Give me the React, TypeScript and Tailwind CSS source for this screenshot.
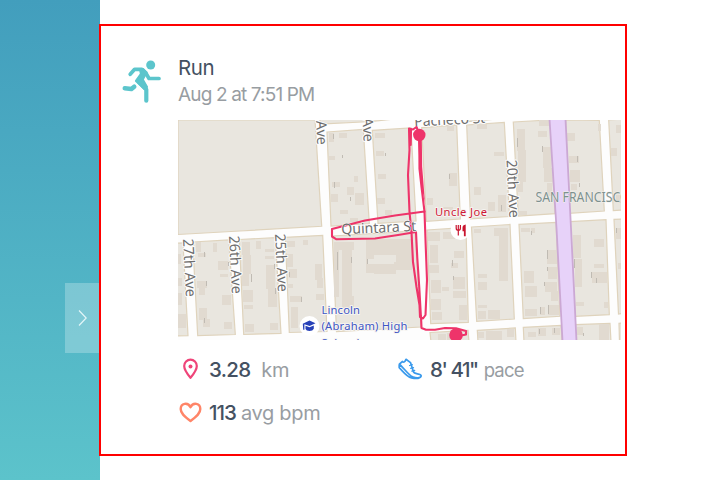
import React from "react";

const blocks = [
  "178,120 315,120 321.7,226.3 240,231 178,234.5",
  "327,132 363.3,129.5 369.3,223.5 331,226",
  "372.3,130.3 411,128 416,221 378,223.3",
  "421.7,127.7 456.7,125 460.3,219 426.5,221.3",
  "466.7,125 504.3,122.5 509.5,216.5 470.5,218.8",
  "513.3,122 550,120 555,213.7 518.3,216",
  "565.7,120 599.3,120.5 604.3,211 569,213.3",
  "608.7,120 623,119 623,210 613.3,210.5",
  "176,243.3 183,242.8 188,335.7 176,336",
  "192.7,242 228.7,240 235.3,334.5 197.7,335.7",
  "239.3,239.5 275.3,237.7 281,333.3 243.7,334.5",
  "285.3,237.3 322.7,235.3 327,331.5 289.3,332.5",
  "332.3,236 415,231 421,327 336.5,331.5",
  "427,230 466,227.5 468.3,322.3 430.7,323.7",
  "471.5,227 510,224.5 514.3,319 476.7,321.3",
  "519,224.3 556,222.5 560,316.3 523.3,318.7",
  "570,221.7 606,219.7 609.3,314.7 575.3,316.3",
  "614,219.3 623,219 623,313.5 618.5,314",
  "430,332.5 468,330.5 469,342 431,342",
  "477.3,330.3 515.3,328 516,342 478,342",
  "523.3,327.3 561,325.5 562,342 524,342",
  "575.3,324.7 610,323.3 611,342 576,342",
  "619,323.3 623,323 623,342 619.5,342",
  "320,117 412,117 372,121.5 320,124",
  "468,117 503,117 503,118.5 468,121.5",
];

const buildings: [number, number, number, number][] = [
  [329, 133, 5, 9], [339, 133, 8, 5], [329, 156, 6, 4], [332, 182, 8, 5], [331, 194, 7, 8],
  [347, 187, 7, 8], [355, 193, 9, 12], [354, 176, 4, 6], [340, 210, 8, 4], [350, 218, 8, 4],
  [375, 133, 10, 5], [376, 151, 8, 5], [378, 174, 8, 5], [377, 198, 8, 6], [385, 210, 7, 5],
  [449, 173, 8, 13], [447, 126, 7, 5], [427, 198, 6, 7], [443, 207, 10, 7],
  [477, 124, 10, 5], [474, 187, 7, 8], [494, 152, 10, 4], [488, 202, 7, 9], [498, 195, 8, 17],
  [517, 129, 8, 22], [518, 150, 8, 32], [517, 182, 6, 10], [518, 211, 9, 4], [539, 120, 11, 6],
  [538, 131, 9, 6], [543, 147, 8, 21], [544, 168, 9, 14], [547, 183, 5, 13],
  [567, 133, 8, 8], [569, 156, 10, 7], [570, 170, 10, 12], [571, 184, 6, 6], [598, 124, 3, 7],
  [611, 148, 6, 8], [616, 125, 5, 8], [616, 195, 5, 8],
  [178, 254, 3, 10], [178, 278, 4, 8], [178, 293, 4, 12], [178, 314, 8, 14],
  [196, 242, 5, 10], [213, 243, 4, 9], [198, 253, 8, 4], [218, 261, 10, 9], [197, 281, 10, 7],
  [199, 288, 6, 7], [220, 274, 8, 3], [222, 295, 9, 10], [199, 308, 8, 12], [203, 319, 7, 8],
  [224, 322, 8, 7], [242, 242, 8, 13], [243, 255, 8, 19], [242, 274, 7, 12], [243, 290, 10, 12],
  [244, 305, 9, 4], [245, 324, 9, 8], [266, 265, 9, 24], [268, 288, 9, 19], [270, 323, 8, 7],
  [256, 241, 5, 8], [265, 249, 9, 3], [265, 256, 9, 3], [286, 241, 9, 6], [287, 254, 6, 13],
  [289, 269, 8, 9], [287, 284, 6, 4], [290, 296, 12, 6], [291, 307, 7, 21], [315, 264, 7, 16],
  [317, 278, 6, 10], [316, 294, 8, 6], [303, 240, 5, 5],
  [334, 242, 20, 8], [334, 250, 5, 47], [342, 250, 10, 46], [342, 296, 12, 12], [366, 239, 46, 16],
  [366, 255, 8, 18], [374, 262, 22, 12], [396, 246, 16, 24],
  [428, 232, 12, 9], [430, 245, 8, 18], [429, 265, 10, 8], [431, 280, 10, 13], [431, 299, 10, 11],
  [432, 312, 10, 8], [443, 232, 12, 7], [454, 251, 10, 7], [451, 263, 7, 5], [453, 277, 12, 12],
  [453, 291, 13, 7], [459, 305, 8, 15], [442, 287, 7, 4],
  [474, 229, 7, 4], [494, 228, 14, 8], [499, 236, 9, 45], [478, 274, 9, 4], [478, 282, 9, 8],
  [478, 305, 9, 3], [478, 311, 8, 8], [488, 310, 12, 9], [521, 228, 9, 4], [531, 228, 4, 5],
  [547, 250, 10, 14], [548, 267, 9, 12], [524, 271, 10, 12], [525, 286, 12, 11], [545, 282, 12, 10],
  [551, 291, 7, 10], [525, 309, 12, 7], [540, 307, 5, 8], [548, 305, 11, 10], [573, 235, 8, 23],
  [575, 259, 7, 28], [594, 239, 10, 8], [594, 264, 10, 4], [592, 272, 15, 11], [576, 302, 8, 4],
  [604, 302, 4, 6], [616, 228, 5, 11], [618, 263, 3, 6],
  [438, 334, 8, 6], [447, 333, 8, 7], [478, 332, 6, 6], [486, 331, 16, 9], [507, 329, 7, 8],
  [528, 332, 8, 5], [538, 328, 8, 8], [552, 328, 8, 7], [577, 327, 6, 8], [599, 324, 10, 16],
];

const marks: [number, number, number][] = [
  [333, 134, 5], [342, 155, 3], [334, 182, 6], [350, 197, 4], [385, 153, 3], [449, 174, 5],
  [517, 138, 9], [542, 146, 6], [577, 156, 6], [579, 183, 4], [204, 252, 5], [206, 281, 5],
  [228, 262, 4], [204, 318, 5], [251, 274, 8], [274, 264, 5], [275, 288, 6], [289, 272, 5],
  [301, 297, 5], [337, 252, 18], [351, 257, 6], [367, 259, 5], [452, 260, 6], [453, 276, 4],
  [547, 250, 9], [547, 267, 4], [544, 282, 4], [540, 307, 7], [548, 305, 9], [574, 259, 9],
  [591, 272, 6], [596, 278, 5], [616, 228, 5], [539, 329, 5], [554, 328, 5], [583, 333, 3],
  [531, 231, 4], [501, 205, 6],
];

function Map() {
  return (
    <svg className="block h-[220px] w-[443px] font-['Noto_Sans',sans-serif]" viewBox="178 120 443 220">
      <rect x="178" y="120" width="443" height="220" fill="#fdfdfd" />
      {blocks.map((p) => (
        <polygon key={p} points={p} fill="#e9e6df" stroke="#dfd3bc" strokeWidth="1.2" />
      ))}
      {buildings.map(([x, y, w, h], i) => (
        <rect key={i} x={x} y={y} width={w} height={h} fill="#e1dad0" />
      ))}
      {marks.map(([x, y, h], i) => (
        <rect key={i} x={x} y={y} width="1" height={h} fill="#c0bbb3" />
      ))}
      <path d="M368 259h26v5h-26z" fill="#e9e6df" />
      <polygon points="549.5,119 565.5,119 571,228 576.5,341 562.5,341 556.5,228" fill="#e7d2f9" stroke="#cba8d4" strokeWidth="1.8" />

      <g fill="#6e6e6e" fontSize="14.5" stroke="#fdfdfd" strokeWidth="2" paintOrder="stroke" strokeLinejoin="round">
        <text transform="translate(316 121) rotate(87)" textLength="24" lengthAdjust="spacingAndGlyphs">Ave</text>
        <text transform="translate(362.5 118) rotate(87)" textLength="24" lengthAdjust="spacingAndGlyphs">Ave</text>
        <text transform="translate(183 239) rotate(87)" textLength="58" lengthAdjust="spacingAndGlyphs">27th Ave</text>
        <text transform="translate(229 236) rotate(87)" textLength="58" lengthAdjust="spacingAndGlyphs">26th Ave</text>
        <text transform="translate(275 234) rotate(87)" textLength="58" lengthAdjust="spacingAndGlyphs">25th Ave</text>
        <text transform="translate(506.5 160) rotate(87)" textLength="58" lengthAdjust="spacingAndGlyphs">20th Ave</text>
        <text transform="translate(414.5 126.5) rotate(-3)" textLength="71" lengthAdjust="spacingAndGlyphs">Pacheco St</text>
      </g>
      <text x="535.5" y="202" fontSize="13.5" fill="#7d918e" textLength="94" lengthAdjust="spacingAndGlyphs" stroke="#f4f1ee" strokeWidth="1" paintOrder="stroke">SAN FRANCISCO</text>

      <g fontSize="11.2" strokeWidth="2" stroke="#f6f4f1" paintOrder="stroke" strokeLinejoin="round">
        <text x="435" y="215.7" fill="#cf1836" textLength="52">Uncle Joe</text>
        <text x="321.5" y="313.7" fill="#3e56c4" textLength="38.5">Lincoln</text>
        <text x="321.5" y="330" fill="#3e56c4" textLength="86">(Abraham) High</text>
        <text x="321.5" y="346.5" fill="#3e56c4" textLength="38">School</text>
      </g>
      <circle cx="460.5" cy="230" r="10" fill="#fff" />
      <path d="M456.2 225v3.3q0 2 2.1 2t2.1-2V225M458.3 225v10.5" fill="none" stroke="#c9152f" strokeWidth="1.2" />
      <path d="M465.7 224.5v11.8h-1.8v-5h-1.4v-3.5q0-2.7 3.2-3.3z" fill="#c9152f" />
      <circle cx="309.5" cy="326" r="10" fill="#fff" />
      <path d="M302.8 323.7l6.7-3.1 6 2.7-5.8 2.7-5.3-1.7v5.4h-1.2zM305.5 325.7l4 1.5 4.3-1.8v3.3q-1 2.3-4.3 2.3t-4-2z" fill="#2741b8" />

      <g fill="none" stroke="#ee346a" strokeWidth="2.1" strokeLinejoin="round" strokeLinecap="round">
        <path d="M419 133L416.5 127L413 129.5L409 128.5L409.5 150L408 175L409.5 212L411.5 232L413 262L416.5 287L419.5 305L420 317L423 318.5L425.5 315L427 280L425.5 240L424.5 211.5L395 215.5L365 220.5L332 229V236.5L336.5 239.3L375 238.5L398 235L416 232L417.3 258L419.3 288L421 318" />
        <path d="M411 130L410.7 145M419.3 136L419.5 169L421.5 187L424.5 211.5M421 316L421.5 328L426 329.7H435L445 328L456 328.3L466 331V334.5L459 336" />
      </g>
      <path d="M418 139h3.8l.4 28 2.9 37-3.7-19-1.6-17z" fill="#ee346a" />
      <circle cx="419.3" cy="135" r="6.2" fill="#ee346a" />
      <circle cx="456" cy="335" r="6.8" fill="#ee346a" />
      <text transform="translate(341.5 234.3) rotate(-2.5)" fontSize="14.5" fill="#6e6e6e" textLength="75" lengthAdjust="spacingAndGlyphs" stroke="#fdfdfd" strokeWidth="1" paintOrder="stroke">Quintara St</text>
    </svg>
  );
}

function Runner() {
  return (
    <svg className="mt-[5px] h-[48px] w-[44px] shrink-0" viewBox="120 57 44 48" fill="none" stroke="#5cc5cc" strokeLinecap="round" strokeLinejoin="round">
      <circle cx="150.7" cy="65" r="4.5" fill="#5cc5cc" stroke="none" />
      <path d="M130.2 74.3l4.4-5h7.4l3.5 3.2 3.5 6h10" strokeWidth="3.7" />
      <path d="M140 69h3l3.5 3.5-3.8 7 4.3 7.5-2.5 2-8.5-8 5-7z" fill="#5cc5cc" strokeWidth="2.2" />
      <path d="M139 82l7.3 7.5v11.2" strokeWidth="4.2" />
      <path d="M124.8 88.2l6.6.8 2.8-2.3" strokeWidth="4.6" />
    </svg>
  );
}

export default function App() {
  return (
    <div className="flex h-[480px] w-[726px] overflow-hidden bg-white font-['Inter','Liberation_Sans',sans-serif] text-[#445162]">
      <aside className="flex h-full w-[100px] shrink-0 justify-end bg-linear-to-b from-[#429ebd] to-[#5cc3cb] pt-[283px]">
        <button className="flex h-[70px] w-[35px] items-center justify-center bg-white/25">
          <svg className="h-4 w-[9px]" viewBox="0 0 9 16" fill="none" stroke="#e3f6f8" strokeWidth="1.2">
            <path d="M1 .5 8.2 8 1 15.5" />
          </svg>
        </button>
      </aside>

      <main className="relative mt-6 -ml-px flex h-[432px] w-[528px] shrink-0 gap-[14px] border-2 border-[#ff0000] bg-white pt-[26px] pl-[19px]">
        <Runner />
        <section className="w-[443px]">
          <h1 className="mt-[3px] h-[26px] text-[20.5px] leading-[26px] tracking-[-0.4px]">Run</h1>
          <p className="mt-px h-[26px] text-[19px] leading-[26px] tracking-[-0.85px] whitespace-nowrap text-[#989da2]">Aug 2 at 7:51 PM</p>
          <div className="mt-[12px] flex"><Map /></div>

          <div className="mt-[15px] grid grid-cols-[220px_1fr] gap-y-[15px] text-[20.5px] leading-7 whitespace-nowrap">
            <div className="flex items-center">
              <svg className="mr-[6px] h-7 w-[25px]" viewBox="0 0 25 28" fill="none" stroke="#ef4479" strokeWidth="2.2" strokeLinejoin="round">
                <path d="M12.5 21.8C8.5 17 6.2 13.4 6.2 10a6.3 6.3 0 0 1 12.6 0c0 3.4-2.3 7-6.3 11.8z" />
                <circle cx="12.5" cy="10.4" r="2" fill="#ef4479" stroke="none" />
              </svg>
              <span className="font-medium tracking-[-0.7px]">3.28</span>
              <span className="ml-[11px] text-[20px] tracking-[-0.4px] text-[#989da2]">km</span>
            </div>
            <div className="flex items-center">
              <svg className="mr-[7px] h-7 w-[25px]" viewBox="398 355 25 28" fill="none" stroke="#3a9aec" strokeWidth="1.7" strokeLinejoin="round" strokeLinecap="round">
                <path d="M399.3 363.2l3.2-2.7c1.2 1.2 2.6.5 3.5-2.2l4.5 3.3 3 9.3c1 2.7 7.2 1.2 7.7 4-.3 2.6-5.5 2.2-8.5 1-4.2-1.8-9.4-9.7-13.4-12.7zM399.2 364v2.7c4.2 4 7 8.8 12.3 10.2 3.7.8 8.7.8 9.7-2" />
                <path d="M409.6 364.5l2.7-.8M410.7 367.4l2.8-.8M411.9 370.2l2.8-.8" strokeWidth="1.3" />
              </svg>
              <span className="font-medium tracking-[-1.45px]">8' 41"</span>
              <span className="ml-[6px] pt-px text-[18.5px] tracking-[-0.8px] text-[#989da2]">pace</span>
            </div>
            <div className="flex items-center">
              <svg className="mr-[6px] h-7 w-[25px]" viewBox="0 0 25 28" fill="none" stroke="#ff8568" strokeWidth="2.4" strokeLinejoin="round">
                <path d="M12.5 22C5.8 17.2 2.7 14.3 2.7 10c0-6 7.2-7.2 9.8-1.8 2.6-5.4 9.8-4.2 9.8 1.8 0 4.3-3.1 7.2-9.8 12z" />
              </svg>
              <span className="font-medium tracking-[-1px]">113</span>
              <span className="ml-[5px] text-[20px] tracking-[-0.3px] text-[#989da2]">avg bpm</span>
            </div>
          </div>
        </section>
      </main>
    </div>
  );
}
